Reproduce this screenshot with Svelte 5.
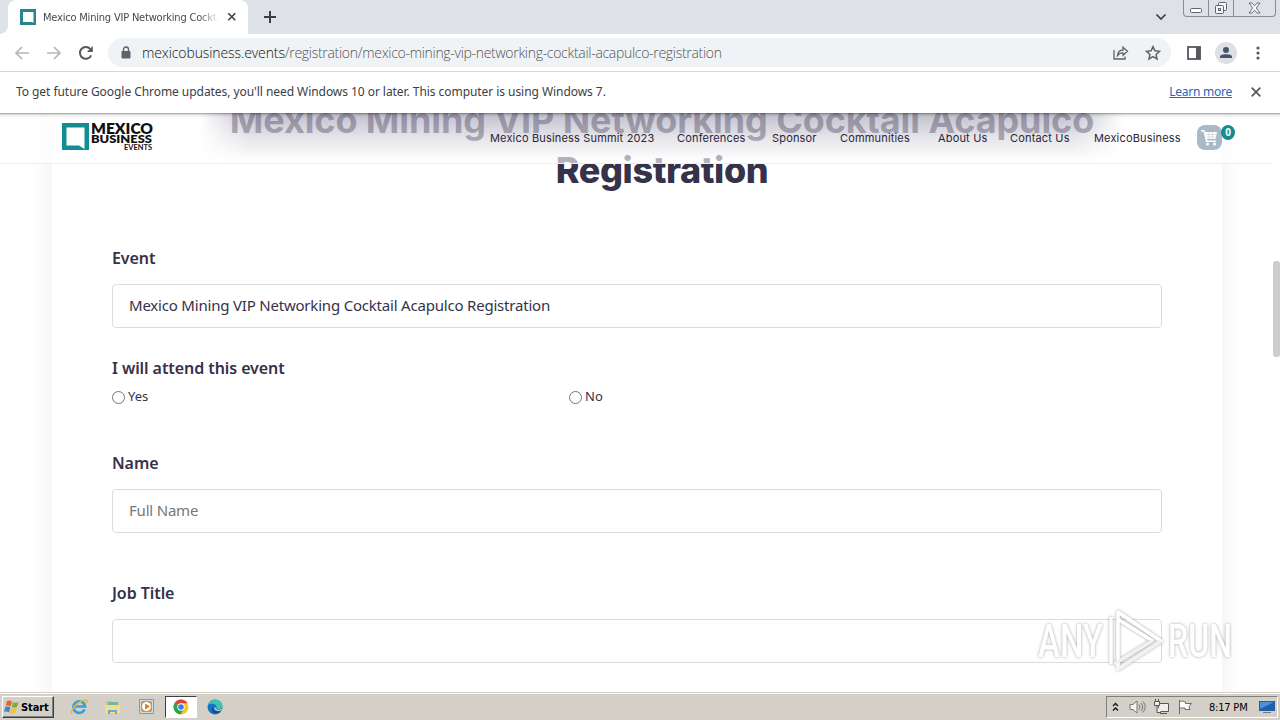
<script lang="ts">
	interface Field {
		label: string;
		value: string;
		placeholder: string;
	}

	const url = {
		host: 'mexicobusiness.events',
		path: '/registration/mexico-mining-vip-networking-cocktail-acapulco-registration'
	};

	const navItems = [
		{ label: 'Mexico Business Summit 2023', width: 163 },
		{ label: 'Conferences', width: 71 },
		{ label: 'Sponsor', width: 44 },
		{ label: 'Communities', width: 74 },
		{ label: 'About Us', width: 48 },
		{ label: 'Contact Us', width: 60 },
		{ label: 'MexicoBusiness', width: 87 }
	];

	const eventField: Field = {
		label: 'Event',
		value: 'Mexico Mining VIP Networking Cocktail Acapulco Registration',
		placeholder: ''
	};
	const nameField: Field = { label: 'Name', value: '', placeholder: 'Full Name' };
	const jobField: Field = { label: 'Job Title', value: '', placeholder: '' };
</script>

{#snippet textField(field: Field)}
	<label class="field">
		<span class="field-label">{field.label}</span>
		<input type="text" value={field.value} placeholder={field.placeholder} />
	</label>
{/snippet}

<div class="desktop">
	<div class="tab-strip">
		<div class="tab-edge"></div>
		<div class="tab">
			<svg class="favicon" width="16" height="16" viewBox="0 0 16 16">
				<path fill="#27868c" d="M0 0h16v16H0z" />
				<path fill="#fff" d="M3 3h10.5v10.5L11 13H3z" />
			</svg>
			<span class="tab-title">Mexico Mining VIP Networking Cockta</span>
			<svg width="10" height="10" viewBox="0 0 10 10">
				<path d="M1.3 1.3l7 7M8.3 1.3l-7 7" stroke="#3c4043" stroke-width="1.600" />
			</svg>
		</div>
		<svg class="new-tab" width="12" height="12" viewBox="0 0 12 12">
			<path d="M6 0v12M0 6h12" stroke="#3c4043" stroke-width="2" />
		</svg>
		<div class="spacer"></div>
		<svg class="tab-search" width="12" height="8" viewBox="0 0 12 8">
			<path d="M1.500 1.500L6 6l4.500-4.500" fill="none" stroke="#3c4043" stroke-width="1.700" />
		</svg>
		<div class="window-buttons">
			<span class="minimize">
				<svg width="13" height="6" viewBox="0 0 13 6">
					<rect x=".5" y=".5" width="11" height="4" rx="1" fill="#fff" stroke="#5b6270" />
				</svg>
			</span>
			<span class="restore">
				<svg width="14" height="14" viewBox="0 0 14 14" fill="#f4f6f8" stroke="#5b6270">
					<rect x="4.500" y="1.500" width="8" height="8" rx="1" />
					<rect x="1.500" y="4.500" width="8" height="8" rx="1" />
					<rect x="4.500" y="7.500" width="2" height="2" />
				</svg>
			</span>
			<span class="close">
				<svg width="13" height="12" viewBox="0 0 13 12">
					<path
						d="M1 1h3l2.500 2.800L9 1h3L8.300 6l3.700 5H9L6.500 8.200 4 11H1l3.700-5z"
						fill="#f8f9fa"
						stroke="#5b6270"
						stroke-width=".9"
					/>
				</svg>
			</span>
		</div>
	</div>

	<div class="toolbar">
		<svg class="nav-icon" width="16" height="16" viewBox="0 0 16 16">
			<path d="M15 8H2M8 2L2 8l6 6" fill="none" stroke="#b4b6b9" stroke-width="1.700" />
		</svg>
		<svg class="nav-icon" width="16" height="16" viewBox="0 0 16 16">
			<path d="M1 8h13M8 2l6 6-6 6" fill="none" stroke="#b4b6b9" stroke-width="1.700" />
		</svg>
		<svg class="nav-icon" width="16" height="16" viewBox="0 0 16 16">
			<path d="M13.200 10.300A5.900 5.900 0 1 1 12.300 4" fill="none" stroke="#55585c" stroke-width="2" />
			<path d="M14.800 1v6H9z" fill="#55585c" />
		</svg>
		<div class="omnibox">
			<svg width="10" height="13" viewBox="0 0 10 13">
				<rect x=".5" y="5" width="9" height="7.500" rx="1" fill="#5f6368" />
				<path d="M2.500 5.500V3.500a2.500 2.500 0 0 1 5 0v2" fill="none" stroke="#5f6368" stroke-width="1.400" />
			</svg>
			<span class="url"><span class="host">{url.host}</span>{url.path}</span>
			<div class="spacer"></div>
			<svg class="share" width="16" height="16" viewBox="0 0 16 16" fill="none" stroke="#5f6368" stroke-width="1.300">
				<path d="M1 5v9h11v-2.500" />
				<path d="M4.500 10.500c.5-4 2.800-5.500 5.500-5.500V2.200l4.500 4-4.500 4V7.800C7.500 7.800 6 8.500 4.500 10.500z" />
			</svg>
			<svg width="16" height="16" viewBox="0 0 16 16">
				<path
					d="M8 1.600l1.900 4.200 4.600.5-3.400 3.100.9 4.600-4-2.400L4 14l.9-4.600-3.400-3.100 4.600-.5z"
					fill="none"
					stroke="#5f6368"
					stroke-width="1.500"
				/>
			</svg>
		</div>
		<svg class="side-panel" width="14" height="14" viewBox="0 0 14 14">
			<rect x="1" y="1" width="12" height="12" fill="none" stroke="#55585c" stroke-width="1.800" />
			<rect x="9" y="1" width="4.500" height="12" fill="#55585c" />
		</svg>
		<svg class="profile" width="22" height="22" viewBox="0 0 22 22">
			<circle cx="11" cy="11" r="11" fill="#dde1e6" />
			<circle cx="11" cy="8" r="3" fill="#46536f" />
			<path d="M5 16v-1.500c0-3 12-3 12 0V16z" fill="#46536f" />
		</svg>
		<svg class="menu" width="4" height="14" viewBox="0 0 4 14" fill="#55585c">
			<circle cx="2" cy="2" r="1.600" />
			<circle cx="2" cy="7" r="1.600" />
			<circle cx="2" cy="12" r="1.600" />
		</svg>
	</div>

	<div class="infobar">
		<span class="info-text">
			To get future Google Chrome updates, you'll need Windows 10 or later. This computer is using
			Windows 7.
		</span>
		<div class="spacer"></div>
		<a class="learn-more" href="#learn">Learn more</a>
		<svg width="10" height="10" viewBox="0 0 10 10">
			<path d="M.7.7l8.600 8.600M9.300.7L.7 9.300" stroke="#55585c" stroke-width="1.700" />
		</svg>
	</div>

	<div class="page">
		<main class="card">
			<h1>
				<span class="title-line">Mexico Mining VIP Networking Cocktail Acapulco</span>
				<span class="title-last">Registration</span>
			</h1>
			<form>
				{@render textField(eventField)}
				<fieldset>
					<legend class="field-label">I will attend this event</legend>
					<div class="choices">
						<label><input type="radio" name="attend" value="yes" />Yes</label>
						<label><input type="radio" name="attend" value="no" />No</label>
					</div>
				</fieldset>
				{@render textField(nameField)}
				{@render textField(jobField)}
			</form>
		</main>

		<header class="site-header">
			<svg class="logo" width="92" height="30" viewBox="0 0 92 30">
				<path fill="#128e93" d="M0 1h27v27H0z" />
				<path fill="#fff" d="M4.500 5.500h18V27L17 23.500H4.500z" />
				<g font-family="Lato, sans-serif" fill="#111">
					<text x="29" y="11.500" font-size="15" font-weight="800" textLength="62" lengthAdjust="spacingAndGlyphs">MEXICO</text>
					<text x="29" y="21" font-size="10.500" font-weight="800" textLength="61" lengthAdjust="spacingAndGlyphs">BUSINESS</text>
					<text x="62" y="28" font-size="6.500" font-weight="700" textLength="28" lengthAdjust="spacingAndGlyphs">EVENTS</text>
				</g>
			</svg>
			<nav>
				{#each navItems as item}
					<a href="#top" style="width: {item.width}px">{item.label}</a>
				{/each}
			</nav>
			<div class="cart">
				<svg width="17" height="17" viewBox="0 0 17 17" fill="#fff">
					<path d="M0 1h3.500l.6 2H16l-1.500 7H6l.3 1.500H15V13H5L2.500 2.500H0z" />
					<circle cx="6.500" cy="15" r="1.500" />
					<circle cx="13.500" cy="15" r="1.500" />
					<path d="M5 5.500h10M5.500 8h9M8 3v7M11.500 3v7" stroke="#a9b9c5" stroke-width=".4" />
				</svg>
				<span class="cart-count">0</span>
			</div>
		</header>
		<div class="infobar-shadow"></div>
		<div class="scroll-thumb"></div>
		<svg class="watermark" width="200" height="70" viewBox="0 0 200 70">
			<g font-family="Roboto, sans-serif" font-size="47" font-weight="500" fill="#fff">
				<text x="2" y="50" textLength="65" lengthAdjust="spacingAndGlyphs">ANY</text>
				<text x="132" y="50" textLength="64" lengthAdjust="spacingAndGlyphs">RUN</text>
			</g>
			<g fill="none" stroke="#fff" stroke-width="3.500" stroke-linejoin="round">
				<path d="M75 10v47M82 5v57l43-28zM83 13l34 21" />
				<path d="M82 62l43-28M78 57l38-23" stroke="#f1f1f1" />
			</g>
		</svg>
	</div>

	<div class="taskbar">
		<button class="start">
			<svg width="16" height="16" viewBox="0 0 16 16">
				<path d="M3 2c2-1 3-.6 5 .5L6.700 7.500C5 6.400 3.500 6.300 1.700 7z" fill="#e8642c" />
				<path d="M9 3c2 1 3.500 1 5.500 0L13 8c-2 1-3.500.8-5.200 0z" fill="#7dac3b" />
				<path d="M1.400 8c2-.8 3.500-.6 5 .5L5 13.500c-1.600-1-3-1.200-5-.5z" fill="#3d87c9" />
				<path d="M7.500 9c1.800 1 3.500 1 5.200 0l-1.500 5c-1.700 1-3.400 1-5 0z" fill="#f5bf32" />
			</svg>
			<span>Start</span>
		</button>
		<span class="task ie">
			<svg width="18" height="18" viewBox="0 0 18 18" fill="none">
				<path d="M14.500 11.500A5.800 5.800 0 1 1 15 8.500H5" stroke="#3a9ed8" stroke-width="2.700" />
				<path d="M2 16C-1 13 9 2 16 2c1.500 0 1.500 1.500.6 3" stroke="#e6b93b" stroke-width="1.500" />
			</svg>
		</span>
		<span class="task">
			<svg width="18" height="18" viewBox="0 0 18 18">
				<path d="M2 3h6l1 2h6v10H2z" fill="#e4c35e" />
				<path d="M4 4h10v5H4z" fill="#71b8a4" />
				<path d="M1 7h15v8H1z" fill="#f4dc8b" />
				<path d="M4 16v-4h9v4h-2v-2H6v2z" fill="#69a9d8" />
			</svg>
		</span>
		<span class="task">
			<svg width="18" height="18" viewBox="0 0 18 18">
				<path d="M1.500 1.500h14v14h-14z" fill="#c9dfed" stroke="#6f9fc5" />
				<rect x="3" y="3" width="11" height="11" rx="2" fill="#ef8b1e" />
				<circle cx="8.500" cy="8.500" r="4.500" fill="#fff" />
				<path d="M7 5.500l5 3-5 3z" fill="#e8761a" />
			</svg>
		</span>
		<span class="task active">
			<svg width="16" height="16" viewBox="0 0 16 16">
				<circle cx="8" cy="8" r="7.500" fill="#f7c52d" />
				<path d="M8 8L1.500 4.200A7.500 7.500 0 0 1 14.500 4.200H8z" fill="#dc4437" />
				<path d="M1.500 4.200A7.500 7.500 0 0 0 7.500 15.500L11 10 8 8z" fill="#2da352" />
				<circle cx="8" cy="8" r="3.700" fill="#fff" />
				<circle cx="8" cy="8" r="2.800" fill="#3f7de8" />
			</svg>
		</span>
		<span class="task">
			<svg width="16" height="16" viewBox="0 0 16 16">
				<circle cx="8" cy="8" r="7.500" fill="#1672c4" />
				<path d="M1 6C3-1 15-1 15.500 7c0 3-4 4-6 2.500C11 6 5 3 1 6z" fill="#42c3b0" />
				<path d="M6 7.500c-1 4 3 6 7.500 4.500C9 17 2 13 6 7.500z" fill="#114a8b" />
				<path d="M9.300 8.800c-1.300 2 2.700 3 5.700.7l-1 2c-3 1-7 0-6.500-3z" fill="#d5d1c9" />
			</svg>
		</span>
		<div class="spacer"></div>
		<div class="tray">
			<svg width="7" height="10" viewBox="0 0 7 10" fill="none" stroke="#111" stroke-width="1.300">
				<path d="M1 4l2.500-2.500L6 4M1 8.500L3.500 6 6 8.500" />
			</svg>
			<svg class="volume" width="17" height="16" viewBox="0 0 17 16" fill="none" stroke="#77777a">
				<path d="M1 5.500h3L8 2v12l-4-3.500H1z" fill="#f5f5f3" />
				<path d="M10 5.500q2 2.500 0 5M12 4q3.500 4 0 8M14 2.500q4.500 5.500 0 11" />
			</svg>
			<svg width="17" height="16" viewBox="0 0 17 16" fill="#efeeea" stroke="#55565a">
				<path d="M5.500 4.500h10v8h-10zM7 14.500h7" />
				<path d="M1.500 2.500h5v4h-5zM2.500 0v2M5.500 0v2M4 6.500v7h4" />
			</svg>
			<svg width="16" height="16" viewBox="0 0 16 16" fill="#fff" stroke="#6d6d6d">
				<path d="M2.500 1v14M2.500 2.500c2-1 4 0 6 .5v1.500h6L12 7.500l1 3H8V9H2.500z" />
			</svg>
			<span class="clock">8:17 PM</span>
			<svg width="16" height="14" viewBox="0 0 16 14">
				<path d="M0 1h16v10H0z" fill="#1e5fae" />
				<path d="M1 2h14L1 9z" fill="#4e91d6" />
				<path d="M4 12h8v1H4z" fill="#777" />
			</svg>
		</div>
	</div>
</div>

<style>
	:global(body) {
		margin: 0;
		overflow: hidden;
	}

	.desktop {
		display: flex;
		flex-direction: column;
		width: 1280px;
		height: 720px;
		background: #fff;
		font-family: 'Noto Sans', sans-serif;
		color: #35324a;
	}

	.desktop * {
		box-sizing: border-box;
	}

	svg {
		display: block;
		flex: none;
	}

	.spacer {
		flex: 1;
	}

	/* browser chrome */
	.tab-strip {
		display: flex;
		align-items: flex-start;
		height: 34px;
		background: #dee1e6;
	}

	.tab-edge {
		width: 8px;
		height: 34px;
		background: radial-gradient(circle at 0 26px, #dee1e6 7.500px, #fff 8px);
		clip-path: inset(26px 0 0 0);
	}

	.tab {
		display: flex;
		align-items: center;
		width: 240px;
		height: 34px;
		padding: 0 11px 0 12px;
		background: #fff;
		border-radius: 8px 8px 0 0;
	}

	.tab-title {
		width: 176px;
		margin: 0 8px 0 7px;
		overflow: hidden;
		white-space: nowrap;
		font-family: 'DejaVu Sans Condensed', 'DejaVu Sans', sans-serif;
		font-stretch: condensed;
		font-size: 11px;
		letter-spacing: -0.2px;
		color: #45484c;
		mask-image: linear-gradient(90deg, #000 155px, transparent 176px);
	}

	.new-tab {
		margin: 11px 0 0 16px;
	}

	.tab-search {
		margin: 13px 16px 0 0;
	}

	.window-buttons {
		display: flex;
		width: 93px;
		height: 17px;
		margin-right: 4px;
		border: 1px solid #888e98;
		border-top: 0;
		border-radius: 0 0 4px 4px;
	}

	.window-buttons span {
		display: flex;
		align-items: center;
		justify-content: center;
		width: 25px;
		border-right: 1px solid #888e98;
	}

	.window-buttons .minimize {
		padding-top: 5px;
	}

	.window-buttons .close {
		flex: 1;
		border-right: 0;
	}

	.toolbar {
		display: flex;
		align-items: center;
		height: 38px;
		padding: 0 20px 0 14px;
		border-bottom: 1px solid #d5d7da;
	}

	.nav-icon {
		margin-right: 16px;
	}

	.omnibox {
		display: flex;
		flex: 1;
		align-items: center;
		height: 29px;
		margin-left: -2px;
		padding: 0 10px 0 13px;
		border-radius: 15px;
		background: #f0f3f5;
	}

	.url {
		margin-left: 11px;
		font-family: 'Open Sans', sans-serif;
		font-size: 14px;
		font-weight: 300;
		letter-spacing: -0.3px;
		color: #505459;
		white-space: nowrap;
	}

	.host {
		letter-spacing: -0.1px;
		color: #111214;
	}

	.share {
		margin-right: 16px;
	}

	.side-panel {
		margin-left: 16px;
	}

	.profile {
		margin: 0 19px 0 14px;
	}

	.infobar {
		display: flex;
		align-items: center;
		height: 41px;
		padding: 0 19px 2px 16px;
		font-size: 12px;
		color: #3c4043;
	}

	.info-text {
		letter-spacing: -0.055px;
		white-space: nowrap;
	}

	.learn-more {
		margin-right: 19px;
		letter-spacing: -0.25px;
		color: #2866b8;
	}

	/* website */
	.page {
		position: relative;
		flex: 1;
		min-height: 0;
		overflow: hidden;
		background: #fff;
	}

	.card {
		width: 1170px;
		height: 700px;
		margin-left: 52px;
		padding: 0 60px;
		box-shadow: 0 0 25px rgba(0, 0, 0, 0.07);
	}

	h1 {
		display: flex;
		flex-direction: column;
		align-items: center;
		height: 133px;
		margin: 0;
		padding-left: 50px;
		font-family: Inter, sans-serif;
		font-size: 36px;
		font-weight: 700;
		line-height: 50px;
		white-space: nowrap;
	}

	.title-line {
		margin-top: -18px;
		letter-spacing: -0.1px;
	}

	.title-last {
		letter-spacing: -0.4px;
		font-weight: 800;
	}

	.field {
		display: block;
		height: 110px;
	}

	.field-label {
		display: block;
		padding: 0;
		font-size: 16px;
		font-weight: 600;
		line-height: 24px;
		letter-spacing: -0.07px;
	}

	.field input {
		display: block;
		width: 1050px;
		height: 44px;
		margin: 14px 0 0;
		padding: 0 16px 2px;
		border: 1px solid #dcdcdf;
		border-radius: 4px;
		background: #fff;
		font: 15px 'Noto Sans', sans-serif;
		letter-spacing: -0.2px;
		color: #35324a;
		outline: 0;
	}

	.field input::placeholder {
		color: #777;
	}

	fieldset {
		height: 95px;
		margin: 0;
		padding: 0;
		border: 0;
	}

	fieldset + .field {
		height: 130px;
	}

	.choices {
		display: grid;
		grid-template-columns: 457px 1fr;
		padding-top: 6px;
		font-size: 13px;
		line-height: 20px;
	}

	.choices label {
		display: flex;
		align-items: center;
		gap: 3px;
	}

	.choices input {
		width: 13px;
		height: 13px;
		margin: 2px 0 0;
	}

	.site-header {
		position: absolute;
		top: 0;
		left: 0;
		display: flex;
		width: 1273px;
		height: 51px;
		padding-left: 62px;
		border-bottom: 1px solid #f0f0f2;
		background: rgba(255, 255, 255, 0.63);
	}

	.site-header::before {
		content: '';
		position: absolute;
		inset: 0 150px 0 200px;
		background: linear-gradient(rgba(75, 68, 105, 0.34), rgba(90, 85, 120, 0.16) 24px, transparent 48px);
		mask-image: linear-gradient(90deg, transparent, #000 50px, #000 calc(100% - 50px), transparent);
	}

	.logo,
	nav,
	.cart {
		position: relative;
	}

	.logo {
		margin-top: 9px;
	}

	nav {
		display: flex;
		gap: 24px;
		margin: 17px 0 0 336px;
		font-family: Inter, sans-serif;
		font-size: 11px;
		line-height: 17px;
		letter-spacing: 0.17px;
	}

	nav a {
		flex: none;
		color: #28263a;
		text-decoration: none;
		white-space: nowrap;
	}

	.cart {
		display: flex;
		align-items: center;
		justify-content: center;
		width: 25px;
		height: 25px;
		margin: 12px 0 0 16px;
		border-radius: 8px;
		background: #a9b9c5;
	}

	.cart-count {
		position: absolute;
		left: 24px;
		top: 0;
		width: 14px;
		height: 15px;
		border-radius: 50%;
		background: #168b8d;
		color: #fff;
		font-size: 10px;
		font-weight: 700;
		line-height: 15px;
		text-align: center;
	}

	.infobar-shadow {
		position: absolute;
		inset: 0 0 auto;
		height: 5px;
		background: linear-gradient(rgba(0, 0, 0, 0.38), rgba(0, 0, 0, 0.08) 40%, transparent);
	}

	.scroll-thumb {
		position: absolute;
		top: 148px;
		right: 0;
		width: 7px;
		height: 96px;
		border-radius: 3px;
		background: #cdcdcd;
	}

	.watermark {
		position: absolute;
		left: 1036px;
		top: 494px;
		filter: drop-shadow(0 0 1.500px rgba(0, 0, 0, 0.35));
	}

	/* windows taskbar */
	.taskbar {
		display: flex;
		align-items: center;
		height: 28px;
		padding: 1px 2px 0;
		border-top: 1px solid #d4d0c8;
		box-shadow: inset 0 1px #fff;
		background: #d4d0c8;
	}

	.start {
		display: flex;
		align-items: center;
		gap: 1px;
		width: 52px;
		height: 22px;
		padding: 0 1px;
		border: 1px solid;
		border-color: #fff #404040 #404040 #fff;
		box-shadow: inset -1px -1px #808080;
		background: #d4d0c8;
		font: bold 11px 'DejaVu Sans Condensed', 'DejaVu Sans', sans-serif;
		font-stretch: condensed;
		letter-spacing: -0.1px;
		color: #000;
	}

	.task {
		display: flex;
		align-items: center;
		justify-content: center;
		width: 32px;
		height: 22px;
		margin-right: 2px;
	}

	.ie {
		margin-left: 9px;
	}

	.task.active {
		border: 1px solid;
		border-color: #404040 #fff #fff #404040;
		background: #fff;
	}

	.tray {
		display: flex;
		align-items: center;
		gap: 7px;
		width: 172px;
		height: 22px;
		padding-left: 5px;
		border: 1px solid;
		border-color: #808080 #fff #fff #808080;
	}

	.volume {
		margin-left: 3px;
	}

	.clock {
		margin: 0 5px 0 9px;
		font: 11px 'DejaVu Sans Condensed', 'DejaVu Sans', sans-serif;
		font-stretch: condensed;
		letter-spacing: -0.2px;
		color: #000;
		white-space: nowrap;
	}
</style>
